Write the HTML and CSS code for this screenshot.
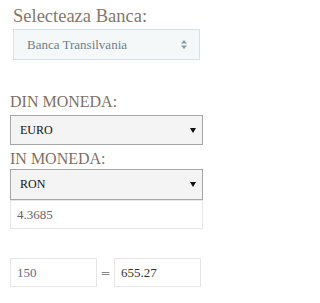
FILE: index.html
```html
<!DOCTYPE html>
<html>
<head>
<meta charset="utf-8">
<link rel="stylesheet" href="styles.css">
</head>
<body>
<div class="page">
  <div class="bank">
    <div class="title">Selecteaza Banca:</div>
    <div class="bank-select">
      <span class="bank-text">Banca Transilvania</span>
      <svg class="updown" width="6" height="9" viewBox="0 0 6 9"><path d="M3 0L6 3.5H0Z M0 5.5H6L3 9Z" fill="#8a979c"/></svg>
    </div>
  </div>
  <div class="label first">DIN MONEDA:</div>
  <div class="select">
    <span>EURO</span>
    <svg class="down" width="6" height="5" viewBox="0 0 6 5"><path d="M0 0H6L3 5Z" fill="#111"/></svg>
  </div>
  <div class="label second">IN MONEDA:</div>
  <div class="select tall">
    <span>RON</span>
    <svg class="down" width="6" height="5" viewBox="0 0 6 5"><path d="M0 0H6L3 5Z" fill="#111"/></svg>
  </div>
  <div class="field rate">4.3685</div>
  <div class="convert">
    <div class="field amount">150</div>
    <div class="eq">=</div>
    <div class="field result">655.27</div>
  </div>
</div>
</body>
</html>
```
FILE: styles.css
```css
html, body {
  margin: 0;
  padding: 0;
  background: #fff;
}
.page {
  padding: 6px 7px 0 10px;
  width: 193px;
  font-family: "Liberation Serif", serif;
}
.bank {
  padding: 0 3px;
}
.title {
  font-size: 18.5px;
  line-height: 20px;
  color: #85786b;
  height: 23px;
}
.bank-select {
  box-sizing: border-box;
  height: 31px;
  border: 1px solid #d5e2e5;
  background: #f5f8f9;
  display: flex;
  align-items: center;
  justify-content: space-between;
  padding: 0 12px 0 13px;
}
.bank-text {
  font-size: 13px;
  color: #6e7f8b;
}
.updown {
  display: block;
}
.label {
  font-size: 16px;
  line-height: 18px;
  color: #7d7068;
}
.label.first {
  margin: 33px 0 4px;
}
.label.second {
  margin: 5px 0 1px;
}
.select {
  box-sizing: border-box;
  height: 30px;
  border: 1px solid #a6a6a6;
  background: #f4f4f4;
  display: flex;
  align-items: center;
  justify-content: space-between;
  padding: 0 6px 0 9px;
  font-size: 12px;
  color: #111;
}
.select.tall {
  height: 31px;
}
.down {
  display: block;
}
.field {
  box-sizing: border-box;
  height: 29px;
  border: 1px solid #e6e6e6;
  display: flex;
  align-items: center;
  padding: 0 6px;
  font-size: 13px;
}
.rate {
  color: #666;
}
.convert {
  display: flex;
  align-items: center;
  margin-top: 29px;
}
.amount {
  width: 87px;
  color: #5c6d86;
}
.eq {
  width: 17px;
  text-align: center;
  font-family: "DejaVu Sans", sans-serif;
  font-size: 12px;
  color: #888;
}
.result {
  width: 87px;
  color: #333;
}
```
